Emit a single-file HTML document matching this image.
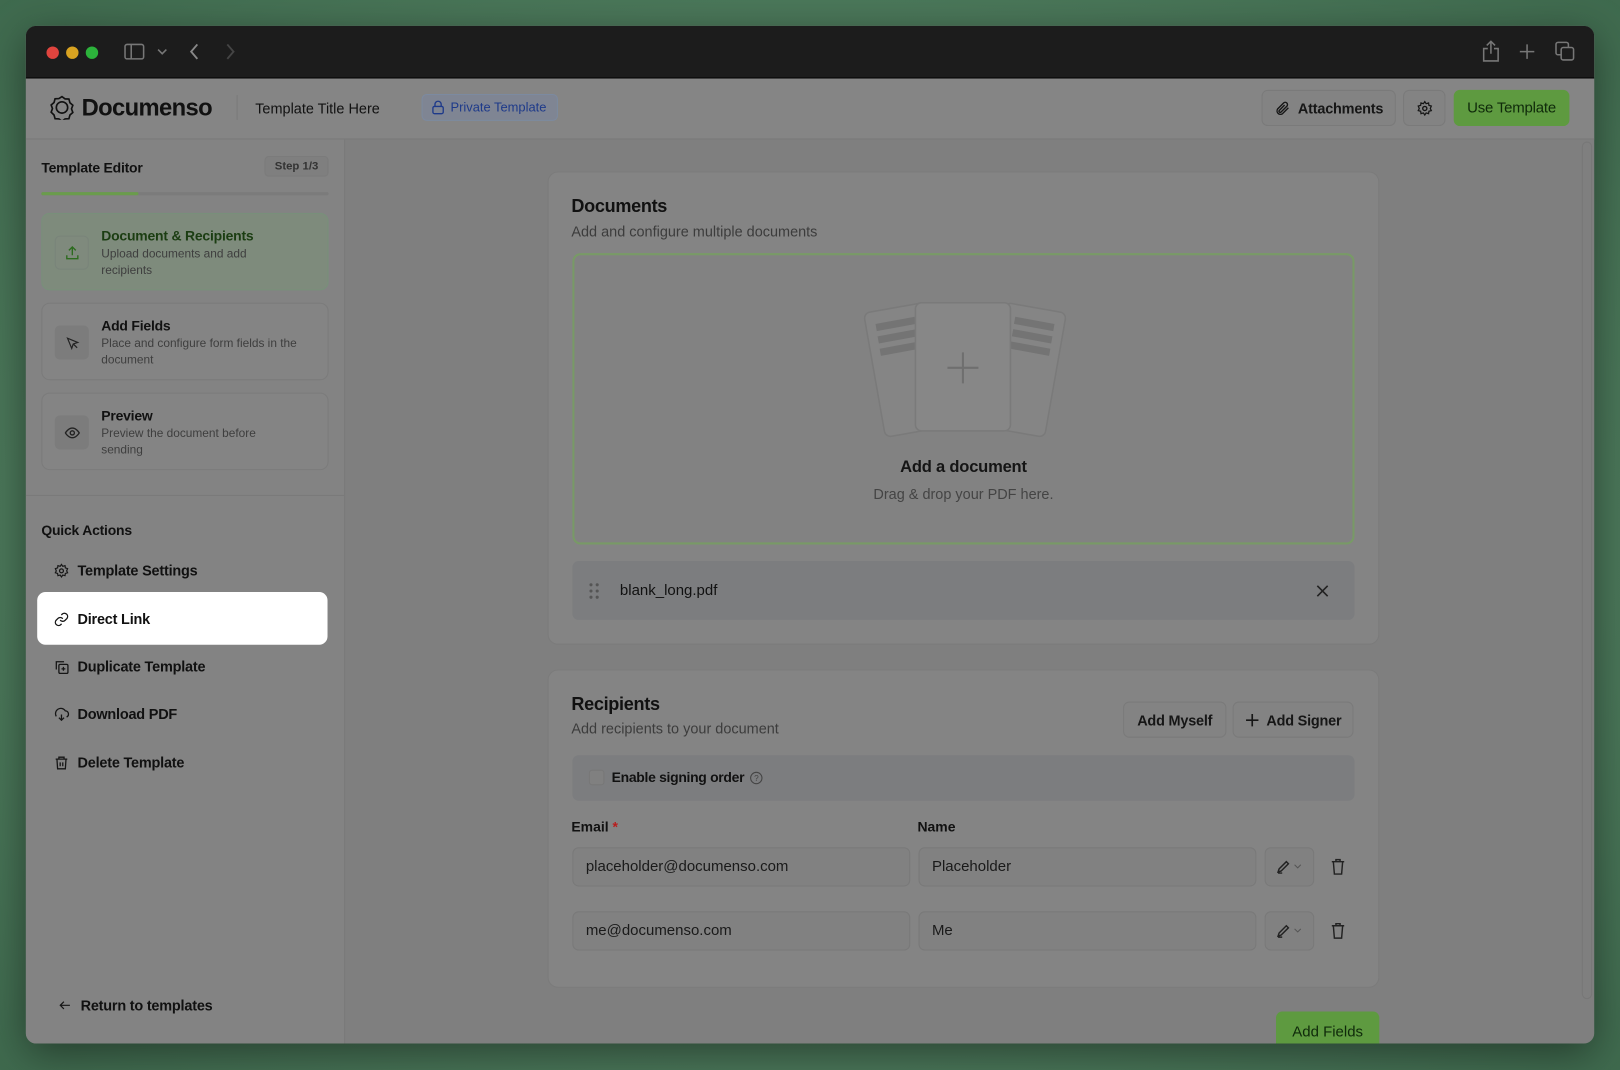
<!DOCTYPE html>
<html><head><meta charset="utf-8"><style>
*{box-sizing:border-box;margin:0;padding:0}
html,body{width:1620px;height:1070px;overflow:hidden;background:#4e7a5d;font-family:"Liberation Sans",sans-serif;color:#111}
#w{position:absolute;left:0;top:0;width:1568px;height:1036px;transform:scale(1.0332);transform-origin:0 0;background:radial-gradient(ellipse at center,#5a8a68 0%,#4b785a 70%,#3f6a4e 100%)}
.win{position:absolute;left:25px;top:25px;width:1518px;height:985px;border-radius:10px;overflow:hidden;background:#7f7f7f;box-shadow:0 10px 40px rgba(0,0,0,.45)}
.tb{position:absolute;left:0;top:0;right:0;height:51px;background:#1c1c1c;border-bottom:1px solid #000}
.dot{position:absolute;top:20px;width:12px;height:12px;border-radius:50%}
.hdr{position:absolute;left:0;top:51px;right:0;height:59px;background:#858585;border-bottom:1px solid #7a7a7a}
.side{position:absolute;left:0;top:110px;width:309px;bottom:0;background:#838383;border-right:1px solid #7a7a7a}
.abs{position:absolute}
.btn{position:absolute;border:1px solid #7a7a7a;border-radius:6px;background:#838383;font-size:14px;font-weight:bold;letter-spacing:-.2px;display:flex;align-items:center;justify-content:center;gap:7px;color:#161616}
.card{position:absolute;background:#848484;border:1px solid #7b7b7b;border-radius:10px}
.step{position:absolute;left:15px;width:278px;height:75px;border:1px solid #7b7b7b;border-radius:8px;background:#848484}
.step .ic{position:absolute;left:12px;top:21px;width:33px;height:33px;border-radius:5px;background:#7c7c7c;display:flex;align-items:center;justify-content:center}
.step b{position:absolute;left:57px;top:14px;font-size:13.5px;letter-spacing:-.2px}
.step span{position:absolute;left:57px;top:32px;width:200px;font-size:11.5px;line-height:15.5px;color:#3e3e3e}
.qa{position:absolute;left:27px;font-size:14px;font-weight:bold;letter-spacing:-.2px;display:flex;align-items:center;gap:8px}
.inp{position:absolute;height:38px;border:1px solid #797979;border-radius:6px;background:#818181;font-size:14.5px;padding-left:12px;display:flex;align-items:center;color:#1a1a1a}
svg{display:block}
</style></head><body><div id="w">
<div class="win">
 <div class="tb">
  <div class="dot" style="left:20px;background:#e0443e"></div>
  <div class="dot" style="left:39px;background:#d9a321"></div>
  <div class="dot" style="left:58px;background:#2cb33b"></div>
  <svg class="abs" style="left:95px;top:17px" width="20" height="16"><rect x="1" y="1" width="18" height="14" rx="2" fill="none" stroke="#777" stroke-width="1.5"/><line x1="7" y1="1" x2="7" y2="15" stroke="#777" stroke-width="1.5"/></svg>
  <svg class="abs" style="left:127px;top:21px" width="10" height="8"><path d="M1 2l4 4 4-4" fill="none" stroke="#777" stroke-width="1.5"/></svg>
  <svg class="abs" style="left:158px;top:16px" width="10" height="18"><path d="M8 2L2 9l6 7" fill="none" stroke="#888" stroke-width="1.8"/></svg>
  <svg class="abs" style="left:193px;top:16px" width="10" height="18"><path d="M2 2l6 7-6 7" fill="none" stroke="#444" stroke-width="1.8"/></svg>
  <svg class="abs" style="left:1409px;top:14px" width="18" height="22"><path d="M9 1v12M5 5l4-4 4 4M6 8H2v12h14V8h-4" fill="none" stroke="#777" stroke-width="1.5"/></svg>
  <svg class="abs" style="left:1445px;top:17px" width="16" height="16"><path d="M8 1v14M1 8h14" stroke="#777" stroke-width="1.5"/></svg>
  <svg class="abs" style="left:1480px;top:15px" width="20" height="20"><rect x="1" y="1" width="12" height="12" rx="2" fill="none" stroke="#777" stroke-width="1.5"/><rect x="6" y="6" width="12" height="12" rx="2" fill="#1c1c1c" stroke="#777" stroke-width="1.5"/></svg>
 </div>
 <div class="hdr">
  <svg class="abs" style="left:23px;top:16px" width="24" height="24" viewBox="0 0 24 24"><path d="M12 1.5l3 2.2 3.7.2 1 3.6 2.8 2.4-1.3 3.5 1.3 3.5-2.8 2.4-1 3.6-3.7.2-3 2.2-3-2.2-3.7-.2-1-3.6L1.5 16.6l1.3-3.5-1.3-3.5 2.8-2.4 1-3.6 3.7-.2z" fill="none" stroke="#111" stroke-width="1.6"/><circle cx="12" cy="12" r="5.5" fill="none" stroke="#111" stroke-width="1.6"/></svg>
  <div class="abs" style="left:54px;top:15px;font-size:23px;font-weight:bold;letter-spacing:-.6px">Documenso</div>
  <div class="abs" style="left:204px;top:16px;width:1px;height:24px;background:#7a7a7a"></div>
  <div class="abs" style="left:222px;top:21px;font-size:14px">Template Title Here</div>
  <div class="abs" style="left:383px;top:15px;width:132px;height:26px;border:1px solid #7c8aa0;border-radius:5px;background:#7f8593;color:#1e3a8a;font-size:12.5px;display:flex;align-items:center;gap:6px;padding-left:9px">
   <svg width="12" height="14"><rect x="1" y="6" width="10" height="7" rx="1.5" fill="none" stroke="#1e3a8a" stroke-width="1.3"/><path d="M3 6V4a3 3 0 016 0v2" fill="none" stroke="#1e3a8a" stroke-width="1.3"/></svg>Private Template</div>
  <div class="btn" style="left:1196px;top:11px;width:130px;height:35px"><svg width="16" height="16" viewBox="0 0 24 24"><path d="M21 11l-8.5 8.5a5 5 0 01-7-7L14 4a3.3 3.3 0 014.7 4.7l-8.5 8.5a1.7 1.7 0 01-2.4-2.4L15.5 7" fill="none" stroke="#161616" stroke-width="2"/></svg>Attachments</div>
  <div class="btn" style="left:1333px;top:11px;width:41px;height:35px"><svg width="16" height="16" viewBox="0 0 24 24"><circle cx="12" cy="12" r="3" fill="none" stroke="#161616" stroke-width="2"/><path d="M12 2l2 3 3.5-1 .5 3.5 3.5 1-1.5 3.5 1.5 3-3.5 1-.5 3.5-3.5-1-2 3-2-3-3.5 1-.5-3.5-3.5-1 1.5-3-1.5-3.5 3.5-1L6.5 4 10 5z" fill="none" stroke="#161616" stroke-width="1.8"/></svg></div>
  <div class="btn" style="left:1382px;top:11px;width:112px;height:35px;background:#5e9a40;border-color:#5e9a40;color:#0f2a0a;font-weight:normal;font-size:14.5px">Use Template</div>
 </div>
 <div class="side">
  <div class="abs" style="left:15px;top:20px;font-size:13.5px;font-weight:bold;letter-spacing:-.2px">Template Editor</div>
  <div class="abs" style="left:231px;top:16px;width:62px;height:20px;border:1px solid #7b7b7b;border-radius:4px;background:#7f7f7f;font-size:11px;font-weight:bold;color:#333;display:flex;align-items:center;justify-content:center">Step 1/3</div>
  <div class="abs" style="left:15px;top:51px;width:278px;height:3px;background:#7b7b7b;border-radius:2px"><div style="width:94px;height:3px;background:#6a9c4c;border-radius:2px"></div></div>
  <div class="step" style="top:71px;background:#7e8b7c;border-color:#78907a"><div class="ic" style="background:#7f8a7d;border:1px solid #79847a"><svg width="16" height="16" viewBox="0 0 24 24"><path d="M12 15V3M7 8l5-5 5 5M4 15v5h16v-5" fill="none" stroke="#2c6b1e" stroke-width="2"/></svg></div><b style="color:#1b3d12">Document &amp; Recipients</b><span style="width:165px">Upload documents and add recipients</span></div>
  <div class="step" style="top:158px"><div class="ic"><svg width="14" height="14" viewBox="0 0 24 24"><path d="M4 4l7 17 2.5-7.5L21 11zM14 14l6 6" fill="none" stroke="#222" stroke-width="2"/></svg></div><b>Add Fields</b><span style="width:210px">Place and configure form fields in the document</span></div>
  <div class="step" style="top:245px"><div class="ic"><svg width="16" height="16" viewBox="0 0 24 24"><path d="M2 12s4-7 10-7 10 7 10 7-4 7-10 7S2 12 2 12z" fill="none" stroke="#222" stroke-width="2"/><circle cx="12" cy="12" r="3" fill="none" stroke="#222" stroke-width="2"/></svg></div><b>Preview</b><span style="width:170px">Preview the document before sending</span></div>
  <div class="abs" style="left:0;top:344px;width:308px;height:1px;background:#7a7a7a"></div>
  <div class="abs" style="left:15px;top:371px;font-size:13.5px;font-weight:bold;letter-spacing:-.2px">Quick Actions</div>
  <div class="qa" style="top:409px"><svg width="15" height="15" viewBox="0 0 24 24"><circle cx="12" cy="12" r="3" fill="none" stroke="#161616" stroke-width="2"/><path d="M12 2l2 3 3.5-1 .5 3.5 3.5 1-1.5 3.5 1.5 3-3.5 1-.5 3.5-3.5-1-2 3-2-3-3.5 1-.5-3.5-3.5-1 1.5-3-1.5-3.5 3.5-1L6.5 4 10 5z" fill="none" stroke="#161616" stroke-width="1.8"/></svg>Template Settings</div>
  <div class="abs" style="left:11px;top:438px;width:281px;height:51px;background:#fff;border-radius:8px"></div>
  <div class="qa" style="top:456px"><svg width="15" height="15" viewBox="0 0 24 24"><path d="M10 13a5 5 0 007.5.5l3-3a5 5 0 00-7-7l-1.7 1.7M14 11a5 5 0 00-7.5-.5l-3 3a5 5 0 007 7l1.7-1.7" fill="none" stroke="#161616" stroke-width="2"/></svg>Direct Link</div>
  <div class="qa" style="top:502px"><svg width="15" height="15" viewBox="0 0 24 24"><rect x="8" y="8" width="14" height="14" rx="2" fill="none" stroke="#161616" stroke-width="2"/><path d="M4 16V4h12M15 12v6M12 15h6" fill="none" stroke="#161616" stroke-width="2"/></svg>Duplicate Template</div>
  <div class="qa" style="top:548px"><svg width="15" height="15" viewBox="0 0 24 24"><path d="M12 12v9M8 17l4 4 4-4M20 16a5 5 0 00-2-9.5A7 7 0 104 15" fill="none" stroke="#161616" stroke-width="2"/></svg>Download PDF</div>
  <div class="qa" style="top:595px"><svg width="15" height="15" viewBox="0 0 24 24"><path d="M3 6h18M8 6V3h8v3M5 6l1 15h12l1-15M10 11v6M14 11v6" fill="none" stroke="#161616" stroke-width="2"/></svg>Delete Template</div>
  <div class="qa" style="top:830px;left:31px"><svg width="14" height="14" viewBox="0 0 24 24"><path d="M20 12H4M10 6l-6 6 6 6" fill="none" stroke="#161616" stroke-width="2"/></svg>Return to templates</div>
 </div>
 <div class="abs" style="right:2px;top:112px;width:10px;height:830px;border:1px solid #777;border-radius:5px"></div>
 <div class="card" style="left:505px;top:141px;width:805px;height:458px">
  <div class="abs" style="left:22px;top:22px;font-size:17.5px;font-weight:bold;letter-spacing:-.3px">Documents</div>
  <div class="abs" style="left:22px;top:49px;font-size:14px;color:#3c3c3c">Add and configure multiple documents</div>
  <div class="abs" style="left:23px;top:78px;width:757px;height:282px;border:2px solid #789a66;border-radius:8px;background:#828282">
   <svg class="abs" style="left:280px;top:38px" width="196" height="140" viewBox="0 0 196 140">
    <g fill="#858585" stroke="#7a7a7a" stroke-width="1.5">
     <rect x="10" y="12" width="60" height="122" rx="6" transform="rotate(-10 40 73)"/>
     <rect x="126" y="12" width="60" height="122" rx="6" transform="rotate(10 156 73)"/>
    </g>
    <g stroke="#747474" stroke-width="7"><path d="M12 32l38-7M14 44l38-7M16 56l38-7M146 25l38 7M144 37l38 7M142 49l38 7"/></g>
    <rect x="50" y="8" width="92" height="124" rx="6" fill="#878787" stroke="#7a7a7a" stroke-width="1.5"/>
    <path d="M96 56v30M81 71h30" stroke="#6f6f6f" stroke-width="2"/>
   </svg>
   <div class="abs" style="left:0;right:0;top:197px;text-align:center;font-size:16px;font-weight:bold;letter-spacing:-.2px;color:#151515">Add a document</div>
   <div class="abs" style="left:0;right:0;top:223px;text-align:center;font-size:14px;color:#444">Drag &amp; drop your PDF here.</div>
  </div>
  <div class="abs" style="left:23px;top:376px;width:757px;height:57px;background:#7c7d7f;border-radius:6px">
   <svg class="abs" style="left:16px;top:21px" width="10" height="16"><g fill="#555"><circle cx="2" cy="2" r="1.5"/><circle cx="8" cy="2" r="1.5"/><circle cx="2" cy="8" r="1.5"/><circle cx="8" cy="8" r="1.5"/><circle cx="2" cy="14" r="1.5"/><circle cx="8" cy="14" r="1.5"/></g></svg>
   <div class="abs" style="left:46px;top:21px;font-size:14.5px">blank_long.pdf</div>
   <svg class="abs" style="left:720px;top:23px" width="12" height="12"><path d="M1 1l10 10M11 1L1 11" stroke="#222" stroke-width="1.6"/></svg>
  </div>
 </div>
 <div class="card" style="left:505px;top:623px;width:805px;height:308px">
  <div class="abs" style="left:22px;top:22px;font-size:17.5px;font-weight:bold;letter-spacing:-.3px">Recipients</div>
  <div class="abs" style="left:22px;top:48px;font-size:14px;color:#3c3c3c">Add recipients to your document</div>
  <div class="btn" style="left:556px;top:30px;width:100px;height:35px">Add Myself</div>
  <div class="btn" style="left:662px;top:30px;width:117px;height:35px"><svg width="14" height="14"><path d="M7 1v12M1 7h12" stroke="#161616" stroke-width="1.6"/></svg>Add Signer</div>
  <div class="abs" style="left:23px;top:82px;width:757px;height:44px;background:#7c7d7f;border-radius:6px">
   <div class="abs" style="left:16px;top:14px;width:15px;height:15px;border:1px solid #777;border-radius:3px;background:#808080"></div>
   <div class="abs" style="left:38px;top:14px;font-size:13.5px;font-weight:bold;letter-spacing:-.3px;display:flex;align-items:center;gap:5px">Enable signing order<svg width="14" height="14"><circle cx="7" cy="7" r="5.5" fill="none" stroke="#444" stroke-width="1"/><text x="7" y="10" font-size="8" text-anchor="middle" fill="#444" font-family="Liberation Sans" font-weight="normal">?</text></svg></div>
  </div>
  <div class="abs" style="left:22px;top:144px;font-size:13.5px;font-weight:bold">Email <span style="color:#b91c1c">*</span></div>
  <div class="abs" style="left:357px;top:144px;font-size:13.5px;font-weight:bold">Name</div>
  <div class="inp" style="left:23px;top:171px;width:327px">placeholder@documenso.com</div>
  <div class="inp" style="left:358px;top:171px;width:327px">Placeholder</div>
  <div class="inp" style="left:693px;top:171px;width:48px;padding-left:10px"><svg width="26" height="14"><path d="M2 12l1-3 7-7 2 2-7 7zM2 13h4" fill="none" stroke="#222" stroke-width="1.4"/><path d="M18 5l3 3 3-3" fill="none" stroke="#555" stroke-width="1"/></svg></div>
  <svg class="abs" style="left:757px;top:182px" width="14" height="16" viewBox="0 0 14 16"><path d="M1 3h12M5 3V1h4v2M2.5 3l1 12h7l1-12" fill="none" stroke="#222" stroke-width="1.4"/></svg>
  <div class="inp" style="left:23px;top:233px;width:327px">me@documenso.com</div>
  <div class="inp" style="left:358px;top:233px;width:327px">Me</div>
  <div class="inp" style="left:693px;top:233px;width:48px;padding-left:10px"><svg width="26" height="14"><path d="M2 12l1-3 7-7 2 2-7 7zM2 13h4" fill="none" stroke="#222" stroke-width="1.4"/><path d="M18 5l3 3 3-3" fill="none" stroke="#555" stroke-width="1"/></svg></div>
  <svg class="abs" style="left:757px;top:244px" width="14" height="16" viewBox="0 0 14 16"><path d="M1 3h12M5 3V1h4v2M2.5 3l1 12h7l1-12" fill="none" stroke="#222" stroke-width="1.4"/></svg>
 </div>
 <div class="abs" style="left:1210px;top:954px;width:100px;height:40px;background:#5e9a40;border-radius:6px;color:#0f2a0a;font-size:14.5px;text-align:center;padding-top:12px">Add Fields</div>
</div>
</div></body></html>
